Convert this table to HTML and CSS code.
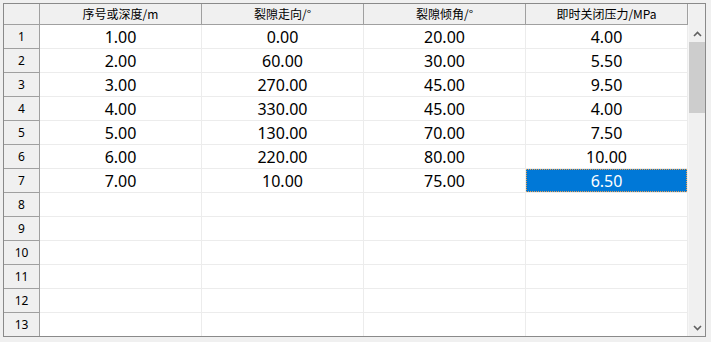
FILE: index.html
```html
<!DOCTYPE html>
<html lang="zh">
<head>
<meta charset="utf-8">
<link rel="stylesheet" href="styles.css">
</head>
<body>
<div class="frame">
  <div class="table">
    <div class="row head">
      <div class="corner"></div>
      <div class="hcell">序号或深度/m</div>
      <div class="hcell">裂隙走向/°</div>
      <div class="hcell">裂隙倾角/°</div>
      <div class="hcell">即时关闭压力/MPa</div>
    </div>
    <div class="row"><div class="rh">1</div><div class="cell">1.00</div><div class="cell">0.00</div><div class="cell">20.00</div><div class="cell">4.00</div></div>
    <div class="row"><div class="rh">2</div><div class="cell">2.00</div><div class="cell">60.00</div><div class="cell">30.00</div><div class="cell">5.50</div></div>
    <div class="row"><div class="rh">3</div><div class="cell">3.00</div><div class="cell">270.00</div><div class="cell">45.00</div><div class="cell">9.50</div></div>
    <div class="row"><div class="rh">4</div><div class="cell">4.00</div><div class="cell">330.00</div><div class="cell">45.00</div><div class="cell">4.00</div></div>
    <div class="row"><div class="rh">5</div><div class="cell">5.00</div><div class="cell">130.00</div><div class="cell">70.00</div><div class="cell">7.50</div></div>
    <div class="row"><div class="rh">6</div><div class="cell">6.00</div><div class="cell">220.00</div><div class="cell">80.00</div><div class="cell">10.00</div></div>
    <div class="row"><div class="rh">7</div><div class="cell">7.00</div><div class="cell">10.00</div><div class="cell">75.00</div><div class="cell"><span class="sel">6.50</span></div></div>
    <div class="row"><div class="rh">8</div><div class="cell"></div><div class="cell"></div><div class="cell"></div><div class="cell"></div></div>
    <div class="row"><div class="rh">9</div><div class="cell"></div><div class="cell"></div><div class="cell"></div><div class="cell"></div></div>
    <div class="row"><div class="rh">10</div><div class="cell"></div><div class="cell"></div><div class="cell"></div><div class="cell"></div></div>
    <div class="row"><div class="rh">11</div><div class="cell"></div><div class="cell"></div><div class="cell"></div><div class="cell"></div></div>
    <div class="row"><div class="rh">12</div><div class="cell"></div><div class="cell"></div><div class="cell"></div><div class="cell"></div></div>
    <div class="row"><div class="rh">13</div><div class="cell"></div><div class="cell"></div><div class="cell"></div><div class="cell"></div></div>
  </div>
  <div class="scroll">
    <div class="scroll-top"></div>
    <div class="arrow">
      <svg width="9" height="6" viewBox="0 0 9 6"><path d="M1 5 L4.5 1.5 L8 5" fill="none" stroke="#606060" stroke-width="1.6"/></svg>
    </div>
    <div class="track">
      <div class="thumb"></div>
    </div>
    <div class="arrow">
      <svg width="9" height="6" viewBox="0 0 9 6"><path d="M1 1 L4.5 4.5 L8 1" fill="none" stroke="#606060" stroke-width="1.6"/></svg>
    </div>
  </div>
</div>
</body>
</html>
```

FILE: styles.css
```css
html, body {
  margin: 0;
  padding: 0;
  background: #f0f0f0;
}
body {
  padding: 3px;
  font-family: "Noto Sans", "Noto Sans CJK SC", sans-serif;
}
.frame {
  width: 701px;
  height: 332px;
  border: 1px solid #8a8a8a;
  display: flex;
  background: #ffffff;
}
.table {
  width: 684px;
  height: 332px;
  overflow: hidden;
  display: flex;
  flex-direction: column;
}
.row {
  display: flex;
  height: 24px;
  flex: none;
}
.row.head {
  height: 21px;
}
.corner, .hcell {
  background: #f0f0f0;
  border-right: 1px solid #a0a0a0;
  border-bottom: 1px solid #a0a0a0;
  box-sizing: border-box;
}
.corner {
  width: 36px;
}
.hcell {
  width: 162px;
  font-family: "Noto Sans CJK SC", "Noto Sans", sans-serif;
  font-size: 12px;
  color: #000;
  display: flex;
  align-items: center;
  justify-content: center;
  padding-bottom: 1px;
}
.rh {
  width: 36px;
  box-sizing: border-box;
  background: #f0f0f0;
  border-right: 1px solid #a0a0a0;
  border-bottom: 1px solid #a0a0a0;
  font-size: 12px;
  color: #000;
  display: flex;
  align-items: center;
  justify-content: center;
}
.cell {
  width: 162px;
  box-sizing: border-box;
  border-right: 1px solid #ececec;
  border-bottom: 1px solid #ececec;
  font-size: 16px;
  color: #000;
  display: flex;
  align-items: center;
  justify-content: center;
  position: relative;
}
.sel {
  position: absolute;
  inset: 0 0 0 0;
  background: #0078d7;
  color: #fff;
  border: 1px dotted #e8a050;
  display: flex;
  align-items: center;
  justify-content: center;
}
.scroll {
  width: 17px;
  height: 332px;
  background: #f0f0f0;
  border-left: 1px solid #f6f6f6;
  box-sizing: border-box;
  display: flex;
  flex-direction: column;
}
.scroll-top {
  height: 21px;
  flex: none;
}
.arrow {
  height: 17px;
  flex: none;
  display: flex;
  align-items: center;
  justify-content: center;
}
.track {
  flex: 1;
}
.thumb {
  height: 71px;
  background: #cdcdcd;
}
```
